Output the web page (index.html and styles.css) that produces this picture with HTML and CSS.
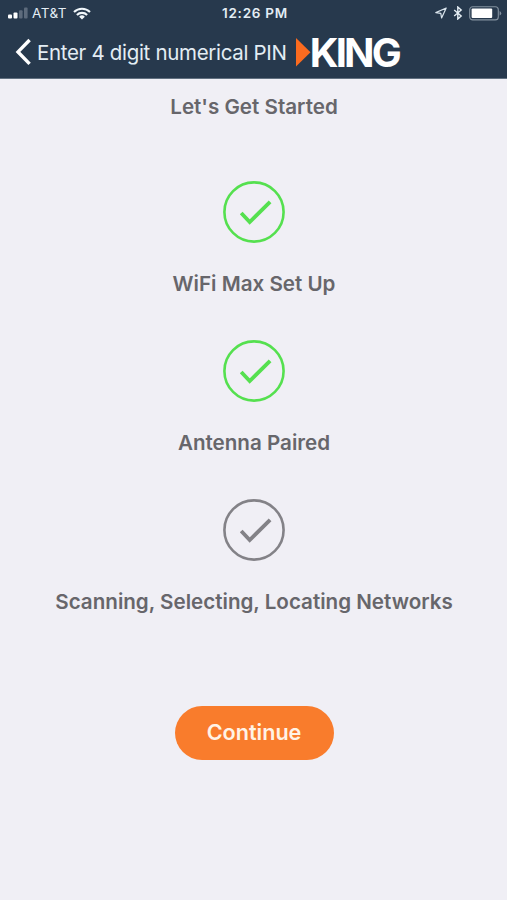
FILE: index.html
```html
<!DOCTYPE html>
<html lang="en">

<head>
    <title>KING WiFi Max</title>
    <meta charset="utf-8">
    <meta name="viewport" content="width=device-width, initial-scale=1.0">

    <link rel="stylesheet" href="styles.css">
</head>

<body>

    <header>
        <div class="statusbar">
            <div class="carrier">
                <svg width="20" height="12" viewBox="0 0 20 12">
                    <rect x="0" y="7.5" width="4" height="4" rx="1" fill="#fff" />
                    <rect x="5.5" y="5.5" width="4" height="6" rx="1" fill="#fff" />
                    <rect x="11" y="3.2" width="3.6" height="8.3" rx="1" fill="#5d6b7c" />
                    <rect x="16" y="0.5" width="3.6" height="11" rx="1" fill="#5d6b7c" />
                </svg>
                <span>AT&amp;T</span>
                <svg class="wifi" width="18" height="13" viewBox="0 0 18 13">
                    <g fill="none" stroke="#f1f7fb" stroke-width="2.1">
                        <path d="M1 5.1a11.3 11.3 0 0 1 16 0" />
                        <path d="M3.9 8a7.2 7.2 0 0 1 10.2 0" />
                    </g>
                    <path d="M6.1 9.7a4.1 4.1 0 0 1 5.8 0L9 12.6z" fill="#f1f7fb" />
                </svg>
            </div>
            <div class="time">12:26 PM</div>
            <div class="icons">
                <svg width="12" height="12" viewBox="0 0 12 12">
                    <path d="M11.2 1L.8 5.6l5 .7.8 4.7z" fill="none" stroke="#d9e4ec" stroke-width="1.2" stroke-linejoin="round" />
                </svg>
                <svg class="bluetooth" width="10" height="14" viewBox="0 0 10 14">
                    <path d="M1.2 4l7 6L4.8 13V1l3.4 3-7 6" fill="none" stroke="#e6eff5" stroke-width="1.4" />
                </svg>
                <svg class="battery" width="33" height="15" viewBox="0 0 33 15">
                    <rect x="0.7" y="0.7" width="28.6" height="13.2" rx="3" fill="none" stroke="#8492a0" stroke-width="1.1" />
                    <rect x="2.6" y="2.6" width="20.6" height="9.4" rx="1" fill="#fff" />
                    <path d="M30.6 5v4.6q1.6-.7 1.6-2.3T30.6 5z" fill="#8492a0" />
                </svg>
            </div>
        </div>

        <nav>
            <svg class="back" width="17" height="28" viewBox="0 0 17 28">
                <path d="M14.6 2L3 13.9l11.6 12" fill="none" stroke="#fff" stroke-width="3.4" />
            </svg>
            <span class="title">Enter 4 digit numerical PIN</span>
            <svg class="logo" width="112" height="52" viewBox="0 0 112 52">
                <path d="M0 12v28.5l14.5-14.2z" fill="#fb6b1f" />
                <text class="logotext" x="13.8" y="40.6" textLength="92" lengthAdjust="spacing">KING</text>
            </svg>
        </nav>
    </header>

    <main>
        <h1>Let's Get Started</h1>

        <section class="step done">
            <svg class="check" width="62" height="62" viewBox="0 0 62 62">
                <circle cx="31" cy="31" r="29.6" />
                <path d="M18.2 32l8.5 9 20.4-20.2" />
            </svg>
            <h2>WiFi Max Set Up</h2>
        </section>

        <section class="step done">
            <svg class="check" width="62" height="62" viewBox="0 0 62 62">
                <circle cx="31" cy="31" r="29.6" />
                <path d="M18.2 32l8.5 9 20.4-20.2" />
            </svg>
            <h2>Antenna Paired</h2>
        </section>

        <section class="step">
            <svg class="check" width="62" height="62" viewBox="0 0 62 62">
                <circle cx="31" cy="31" r="29.6" />
                <path d="M18.2 32l8.5 9 20.4-20.2" />
            </svg>
            <h2>Scanning, Selecting, Locating Networks</h2>
        </section>

        <button class="continue">Continue</button>
    </main>

</body>

</html>
```
FILE: styles.css
```css
body {
    margin: 0;
    min-height: 900px;
    background-color: #f0eff5;
    font-family: Inter, "Liberation Sans", sans-serif;
}

svg {
    display: block;
    flex-shrink: 0;
}

header {
    box-sizing: border-box;
    height: 79px;
    background-color: #27394d;
    border-bottom: 1px solid #617080;
}

.statusbar {
    display: grid;
    grid-template-columns: 1fr auto 1fr;
    align-items: center;
    height: 26px;
    padding: 0 5px 0 8px;
    color: #e3edf4;
    font-size: 13.5px;
}

.carrier {
    display: flex;
    align-items: center;
    gap: 4px;
    letter-spacing: 0.5px;
}

.wifi {
    margin-left: 2px;
}

.time {
    font-weight: 600;
    letter-spacing: 0.75px;
}

.icons {
    display: flex;
    align-items: center;
    justify-content: flex-end;
}

.bluetooth {
    margin-left: 6px;
}

.battery {
    margin-left: 6px;
}

nav {
    display: flex;
    align-items: center;
    height: 52px;
    padding-left: 15px;
}

.title {
    margin-left: 5px;
    color: #e3edf4;
    font-size: 20.5px;
    letter-spacing: -0.32px;
    white-space: nowrap;
}

.logo {
    margin-left: 9px;
}

.logotext {
    fill: #fff;
    font-size: 40px;
    font-weight: 700;
}

main {
    display: flex;
    flex-direction: column;
    align-items: center;
    padding-left: 1px;
}

h1,
h2 {
    margin: 0;
    color: #67666b;
    font-size: 20.6px;
    font-weight: 600;
    line-height: 28px;
    white-space: nowrap;
}

h1 {
    margin: 14px 0 60px;
}

.step {
    display: flex;
    flex-direction: column;
    align-items: center;
    height: 159px;
}

.step h2 {
    margin-top: 27px;
}

.check {
    fill: none;
    stroke: #838287;
    stroke-width: 2.6;
}

.check path {
    stroke-width: 3.8;
}

.done .check {
    stroke: #55e04f;
}

.continue {
    width: 159px;
    height: 54px;
    margin-top: 48px;
    padding: 0 0 2px;
    border: none;
    border-radius: 27px;
    background-color: #f97c2c;
    color: #fff3e6;
    font-family: inherit;
    font-size: 21.6px;
    font-weight: 600;
}
```
